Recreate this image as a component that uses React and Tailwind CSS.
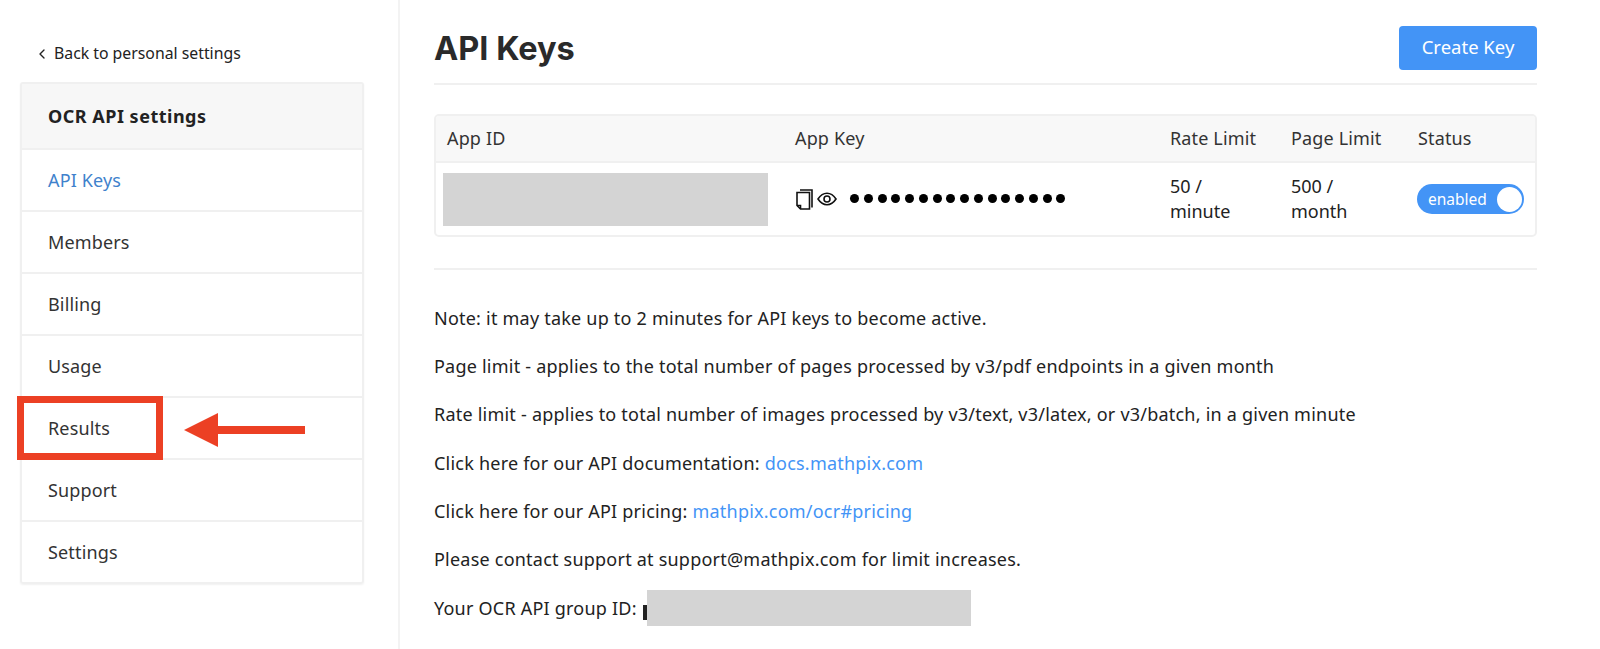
import React from "react";
import { ChevronLeft } from "lucide-react";

const NAV_ITEMS = ["API Keys", "Members", "Billing", "Usage", "Results", "Support", "Settings"];

const NOTES = [
  { text: "Note: it may take up to 2 minutes for API keys to become active." },
  { text: "Page limit - applies to the total number of pages processed by v3/pdf endpoints in a given month" },
  { text: "Rate limit - applies to total number of images processed by v3/text, v3/latex, or v3/batch, in a given minute" },
  { text: "Click here for our API documentation: ", link: "docs.mathpix.com" },
  { text: "Click here for our API pricing: ", link: "mathpix.com/ocr#pricing" },
  { text: "Please contact support at support@mathpix.com for limit increases." },
];

function CopyIcon() {
  return (
    <svg width="17" height="21" viewBox="0 0 17 21" fill="none" stroke="#111" strokeWidth="1.6" className="shrink-0">
      <path d="M4 1h12v17.5" />
      <path d="M1 3.5h12.5v16.5H4.5L1 16.500z" />
      <path d="M1 16.500h3.500V20" />
    </svg>
  );
}

function EyeIcon() {
  return (
    <svg width="20" height="14" viewBox="0 0 20 14" fill="none" stroke="#111" strokeWidth="1.6" className="shrink-0">
      <path d="M1 7c2.500-3.800 5.500-5.700 9-5.700S16.500 3.200 19 7c-2.500 3.800-5.500 5.700-9 5.700S3.500 10.800 1 7z" />
      <circle cx="10" cy="7" r="3" />
    </svg>
  );
}

function Sidebar() {
  return (
    <aside className="w-[400px] h-[649px] shrink-0 border-r-2 border-[#f3f3f3] pl-5 pr-[34px] pt-[44px]">
      <div className="flex items-center h-[20px] pl-[14px] gap-[4px] text-[15.800px] text-[#222]">
        <ChevronLeft size={16} strokeWidth={2} />
        <span>Back to personal settings</span>
      </div>
      <div className="relative mt-[18px] border-2 border-[#f0f0f0] rounded-[3px] text-[18px] text-[#333] tracking-[0.15px] shadow-[0_1px_2px_rgba(0,0,0,0.06)]">
        <div className="h-[64px] flex items-center pl-[26px] bg-[#f7f7f7] font-bold text-[#222] tracking-[0.5px]">
          OCR API settings
        </div>
        {NAV_ITEMS.map((item) => (
          <div
            key={item}
            className={`h-[62px] flex items-center pl-[26px] border-t-2 border-[#f0f0f0] ${item === "API Keys" ? "text-[#3f82cc]" : ""}`}
          >
            {item}
          </div>
        ))}
        {/* red callout drawn over the Results row */}
        <div className="absolute left-[-5px] top-[312px] w-[146px] h-[64px] border-[7px] border-[#ec4024]" />
        <svg width="122" height="34" viewBox="0 0 122 34" className="absolute left-[162px] top-[329px]">
          <path d="M0 17 34 0v13h87v8H34v13z" fill="#ec4024" />
        </svg>
      </div>
    </aside>
  );
}

function KeysTable() {
  return (
    <div className="mt-[29px] border-2 border-[#f0f0f0] rounded-[5px] overflow-hidden text-[#222]">
      <div className="grid grid-cols-[347px_375px_121px_127px_1fr] h-[47px] items-center bg-[#f8f8f8] border-b-2 border-[#f0f0f0] text-[18px] tracking-[0.15px] text-[#333]">
        <div className="pl-[11px]">App ID</div>
        <div className="pl-[12px]">App Key</div>
        <div className="pl-[12px]">Rate Limit</div>
        <div className="pl-[12px]">Page Limit</div>
        <div className="pl-[12px]">Status</div>
      </div>
      <div className="grid grid-cols-[347px_375px_121px_127px_1fr] h-[72px] items-center text-[18px] leading-[25px]">
        <div className="pl-[7px]">
          <div className="w-[325px] h-[53px] bg-[#d4d4d4]" />
        </div>
        <div className="flex items-center pl-[13px]">
          <CopyIcon />
          <span className="ml-[4px]"><EyeIcon /></span>
          <div className="ml-[13px] -mt-[2px] flex gap-[4.780px]">
            {Array.from({ length: 16 }).map((_, i) => (
              <span key={i} className="w-[9px] h-[9px] rounded-full bg-black" />
            ))}
          </div>
        </div>
        <div className="pl-[12px]">50 /<br />minute</div>
        <div className="pl-[12px]">500 /<br />month</div>
        <div className="pl-[11px]">
          <div className="w-[107px] h-[30px] rounded-full bg-[#4394f6] flex items-center justify-between pl-[11px] pr-[2px] text-white text-[15.500px]">
            enabled
            <span className="w-[25px] h-[25px] rounded-full bg-white" />
          </div>
        </div>
      </div>
    </div>
  );
}

export default function App() {
  return (
    <div className="flex w-[1600px] h-[649px] overflow-hidden bg-white" style={{ fontFamily: '"Noto Sans", sans-serif' }}>
      <Sidebar />
      <main className="w-[1103px] ml-[34px]">
        <div className="flex items-center justify-between h-[85px] pt-[13px] border-b-2 border-[#f0f0f0]">
          <h1 className="text-[32.500px] font-bold text-[#2a2a2a] mt-[2px]" style={{ fontFamily: "Inter, sans-serif" }}>API Keys</h1>
          <button className="w-[138px] h-[44px] rounded-[4px] bg-[#4394f6] text-white text-[18.500px] leading-[40px] pb-[2px]">Create Key</button>
        </div>
        <KeysTable />
        <div className="mt-[31px] border-t-2 border-[#f0f0f0] pt-[35px] text-[18px] tracking-[0.22px] text-[#222]">
          {NOTES.map((note) => (
            <p key={note.text} className="h-[48.200px] leading-[26px]">
              {note.text}
              {note.link && <span className="text-[#4394f6]">{note.link}</span>}
            </p>
          ))}
          <div className="flex items-center h-[36px] -mt-[4px]">
            <span className="w-[209px] shrink-0">Your OCR API group ID:</span>
            <span className="w-[4px] h-[15px] mt-[8px] bg-[#222]" />
            <span className="w-[324px] h-[36px] bg-[#d4d4d4]" />
          </div>
        </div>
      </main>
    </div>
  );
}
